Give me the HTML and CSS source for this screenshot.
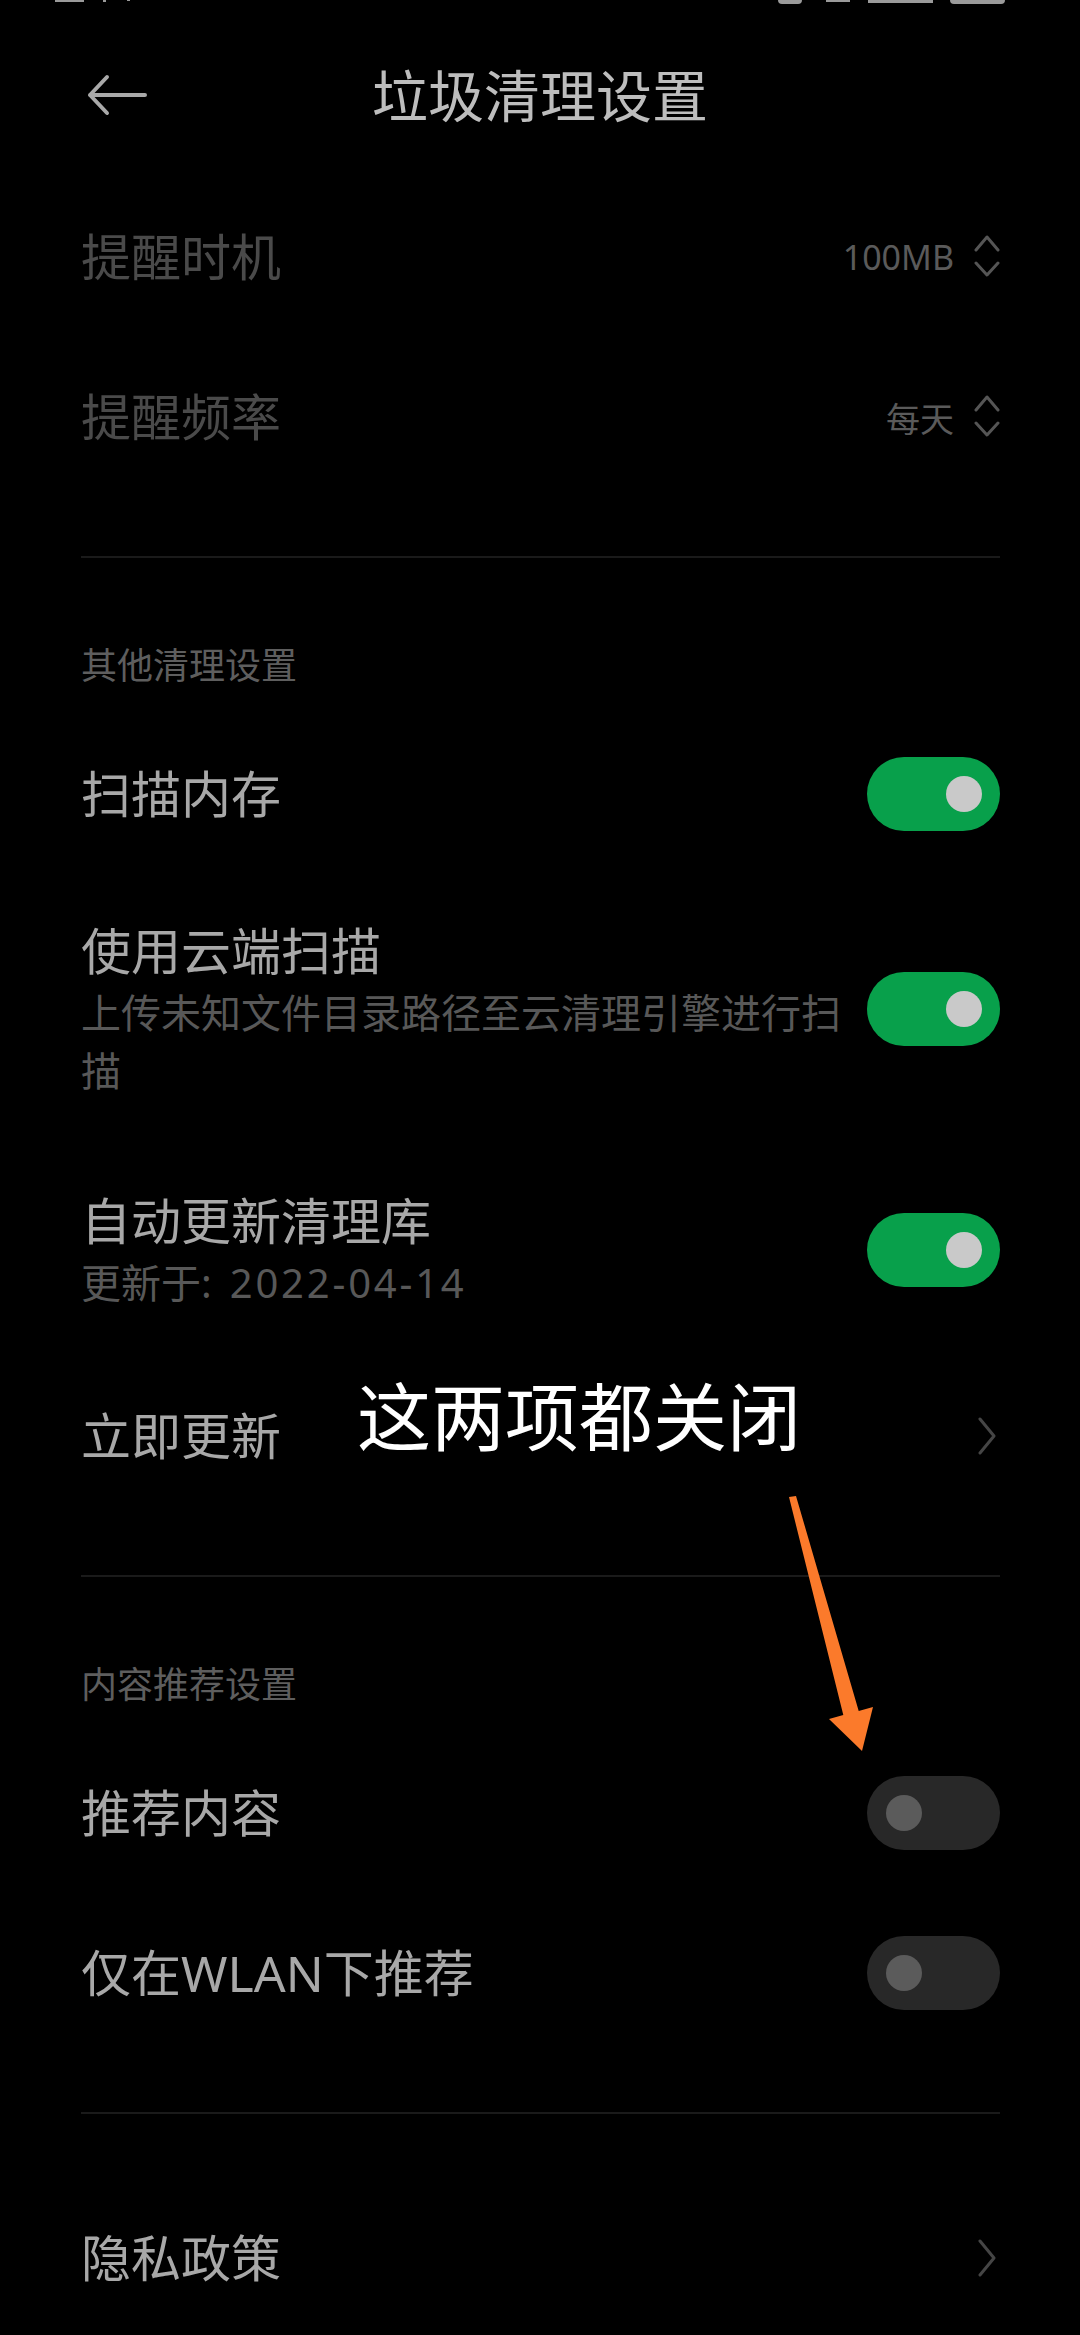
FILE: index.html
```html
<!DOCTYPE html>
<html lang="zh-CN">
  <head>
    <meta charset="UTF-8" />
    <meta name="viewport" content="width=device-width, initial-scale=1.0" />
    <title>垃圾清理设置</title>
    <link rel="stylesheet" href="styles.css">
  </head>
  <body>
    <div class="page">
      <div class="status-bar">
        <div class="status-left">
          <span class="sb sb-time"></span>
          <span class="sb sb-dot"></span>
          <span class="sb sb-dot2"></span>
        </div>
        <div class="status-right">
          <span class="sb sb-alarm"></span>
          <span class="sb sb-vib"></span>
          <span class="sb sb-signal"></span>
          <span class="sb sb-battery"></span>
        </div>
      </div>

      <div class="header">
        <div class="back">
          <svg width="62" height="42" viewBox="0 0 62 42">
            <path d="M4 21 H59 M4 21 L21 3 M4 21 L21 39" fill="none" stroke="#a9a9a9" stroke-width="4" stroke-linecap="round" stroke-linejoin="round" />
          </svg>
        </div>
        <div class="title">垃圾清理设置</div>
        <div></div>
      </div>

      <div class="group">
        <div class="row">
          <div class="row-title disabled">提醒时机</div>
          <div class="value">
            <span>100MB</span>
            <svg class="updown" width="26" height="42" viewBox="0 0 26 42">
              <path d="M2 15 L13 2 L24 15 M2 28 L13 40 L24 28" fill="none" stroke="#555" stroke-width="3" stroke-linecap="round" stroke-linejoin="round" />
            </svg>
          </div>
        </div>
        <div class="row">
          <div class="row-title disabled">提醒频率</div>
          <div class="value">
            <span>每天</span>
            <svg class="updown" width="26" height="42" viewBox="0 0 26 42">
              <path d="M2 15 L13 2 L24 15 M2 28 L13 40 L24 28" fill="none" stroke="#555" stroke-width="3" stroke-linecap="round" stroke-linejoin="round" />
            </svg>
          </div>
        </div>
      </div>
      <div class="divider"></div>

      <div class="section-title">其他清理设置</div>
      <div class="group">
        <div class="row">
          <div class="row-title">扫描内存</div>
          <div class="switch on"><span class="knob"></span></div>
        </div>
        <div class="row">
          <div class="row-text">
            <div class="row-title">使用云端扫描</div>
            <div class="row-sub">上传未知文件目录路径至云清理引擎进行扫描</div>
          </div>
          <div class="switch on"><span class="knob"></span></div>
        </div>
        <div class="row">
          <div class="row-text">
            <div class="row-title">自动更新清理库</div>
            <div class="row-sub">更新于:<span class="date">2022-04-14</span></div>
          </div>
          <div class="switch on"><span class="knob"></span></div>
        </div>
        <div class="row">
          <div class="row-title">立即更新</div>
          <svg class="arrow-right" width="22" height="38" viewBox="0 0 22 38">
            <path d="M4 2 L18 19 L4 36" fill="none" stroke="#454545" stroke-width="3" stroke-linecap="round" stroke-linejoin="round" />
          </svg>
        </div>
      </div>
      <div class="divider"></div>

      <div class="section-title">内容推荐设置</div>
      <div class="group">
        <div class="row">
          <div class="row-title">推荐内容</div>
          <div class="switch"><span class="knob"></span></div>
        </div>
        <div class="row">
          <div class="row-title">仅在WLAN下推荐</div>
          <div class="switch"><span class="knob"></span></div>
        </div>
      </div>
      <div class="divider"></div>

      <div class="group last">
        <div class="row">
          <div class="row-title">隐私政策</div>
          <svg class="arrow-right" width="22" height="38" viewBox="0 0 22 38">
            <path d="M4 2 L18 19 L4 36" fill="none" stroke="#454545" stroke-width="3" stroke-linecap="round" stroke-linejoin="round" />
          </svg>
        </div>
      </div>

      <!-- 标注 -->
      <div class="note">这两项都关闭</div>
      <svg class="note-arrow" width="120" height="270" viewBox="0 0 120 270">
        <polygon points="19,7 26,6 88.7,220.9 103,217 92,261 59,229 73.3,225.1" fill="#fb7a2b" />
      </svg>
    </div>
  </body>
</html>
```

FILE: styles.css
```css
* {
  margin: 0;
  padding: 0;
  box-sizing: border-box;
}
body {
  background-color: #000;
  font-family: "Noto Sans", "Noto Sans CJK SC", sans-serif;
}
.page {
  width: 1080px;
  height: 2335px;
  position: relative;
  overflow: hidden;
}

/* 状态栏只露出底部一点 */
.status-bar {
  height: 4px;
  display: flex;
  justify-content: space-between;
  padding: 0 75px 0 55px;
}
.status-left,
.status-right {
  display: flex;
  align-items: flex-start;
}
.sb {
  display: block;
  background-color: #9a9a9a;
}
.sb-time {
  width: 29px;
  height: 2px;
}
.sb-dot {
  width: 3px;
  height: 2px;
  margin-left: 19px;
}
.sb-dot2 {
  width: 3px;
  height: 1px;
  margin-left: 21px;
}
.sb-alarm {
  width: 24px;
  height: 4px;
  border-radius: 0 0 12px 12px;
}
.sb-vib {
  width: 24px;
  height: 2px;
  margin-left: 24px;
}
.sb-signal {
  width: 65px;
  height: 3px;
  margin-left: 18px;
}
.sb-battery {
  width: 55px;
  height: 4px;
  margin-left: 17px;
  border-radius: 0 0 6px 6px;
}

.header {
  height: 173px;
  padding: 8px 86px 0 86px;
  display: grid;
  grid-template-columns: 1fr auto 1fr;
  align-items: center;
}
.back svg {
  display: block;
}
.title {
  font-size: 56px;
  line-height: 80px;
  color: #bdbdbd;
}

.group {
  padding-bottom: 59px;
}
.group.last {
  padding-top: 64px;
  padding-bottom: 0;
}
.divider {
  height: 2px;
  margin: 0 80px 0 81px;
  background-color: #1a1a1a;
}
.section-title {
  padding: 83px 81px 23px;
  font-size: 36px;
  line-height: 50px;
  color: #5e5e5e;
}

.row {
  min-height: 160px;
  padding: 44px 80px 44px 81px;
  display: flex;
  align-items: center;
  justify-content: space-between;
  gap: 20px;
}
.row-text {
  flex: 1;
  min-width: 0;
}
.row-title {
  font-size: 50px;
  line-height: 66px;
  color: #a8a8a8;
}
.row-title.disabled {
  color: #4a4a4a;
}
.row-sub {
  font-size: 40px;
  line-height: 58px;
  color: #585858;
}
.row-sub .date {
  margin-left: 18px;
  letter-spacing: 2.8px;
}

.value {
  display: flex;
  align-items: center;
  gap: 20px;
  font-size: 34px;
  color: #5a5a5a;
}
.updown {
  display: block;
  margin-top: -3px;
}
.arrow-right {
  display: block;
  margin-right: 2px;
}

.switch {
  flex: none;
  width: 133px;
  height: 74px;
  margin: -1px 0;
  border-radius: 37px;
  background-color: #282828;
  padding: 19px;
  display: flex;
  justify-content: flex-start;
}
.switch .knob {
  width: 36px;
  height: 36px;
  border-radius: 50%;
  background-color: #5b5b5b;
}
.switch.on {
  background-color: #08a04b;
  justify-content: flex-end;
  padding-right: 18px;
}
.switch.on .knob {
  background-color: #c9c9c9;
}

.note {
  position: absolute;
  left: 357px;
  top: 1380px;
  font-size: 74px;
  line-height: 74px;
  color: #fff;
}
.note-arrow {
  position: absolute;
  left: 770px;
  top: 1490px;
}
```
